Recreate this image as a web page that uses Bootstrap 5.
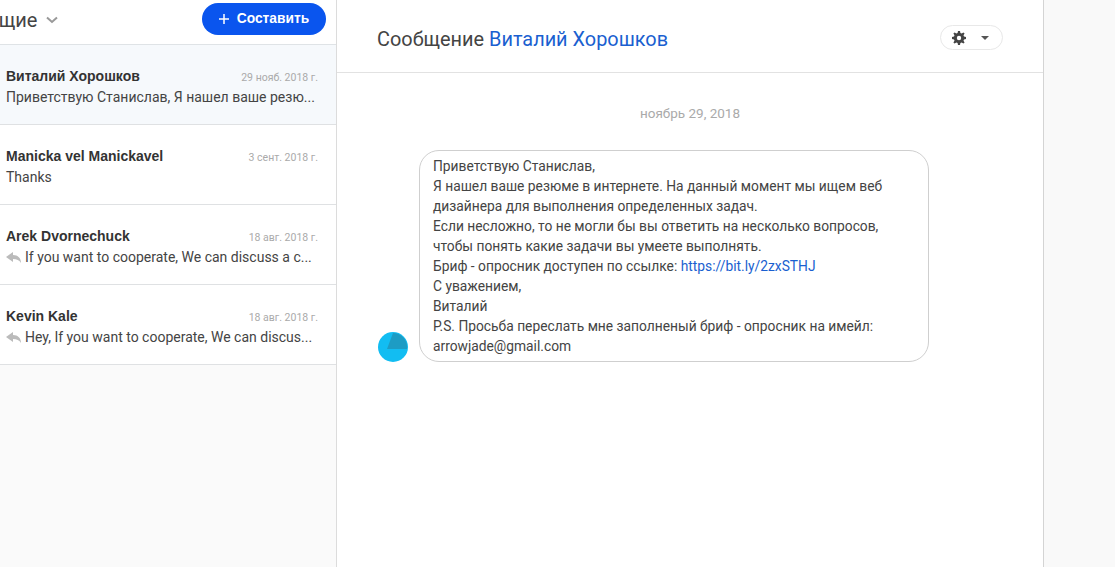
<!DOCTYPE html>
<html lang="ru">
<head>
  <meta charset="UTF-8">
  <title>Сообщение</title>
  <meta name="viewport" content="width=device-width, initial-scale=1">
  <link href="https://cdn.jsdelivr.net/npm/bootstrap@5.3.2/dist/css/bootstrap.min.css" rel="stylesheet">
  <style>
    html, body {
      height: 100%;
      overflow: hidden;
    }
    body {
      background-color: #f9f9f9;
      font-family: Roboto, "Liberation Sans", sans-serif;
      font-size: 13.8px;
      color: #333;
    }
    .page-wrap {
      width: 1044px;
      height: 567px;
    }
    .side-col {
      width: 337px;
      flex: none;
      background-color: #fafafa;
      border-right: 1px solid #dcdcdc;
    }
    .side-head {
      height: 45px;
      background-color: #fff;
      border-bottom: 1px solid #dfe3e6;
      padding-right: 10px;
      overflow: hidden;
    }
    .folder-wrap {
      margin-top: -5px;
    }
    .folder-name {
      font-size: 20px;
      margin-left: -26px;
      color: #444;
    }
    .btn-compose {
      height: 32px;
      width: 124px;
      border-radius: 16px;
      background-color: #0a55ee;
      color: #fff;
      font-family: "Liberation Sans", sans-serif;
      font-weight: 700;
      font-size: 13.8px;
      border: none;
      padding: 0;
      margin-top: -6px;
    }
    .btn-compose:hover {
      background-color: #0a4ad0;
      color: #fff;
    }
    .mail-row {
      display: block;
      height: 80px;
      padding: 21px 18px 0 6px;
      background-color: #fff;
      border-bottom: 1px solid #dfe1e3;
      line-height: 20px;
    }
    .mail-row.is-active {
      background-color: #f6f9fc;
    }
    .mail-from {
      font-family: "Liberation Sans", sans-serif;
      font-size: 14px;
      font-weight: 700;
      color: #333;
    }
    .mail-date {
      font-size: 10.5px;
      color: #aaa;
    }
    .mail-text {
      white-space: nowrap;
      font-size: 14px;
      color: #444;
      margin-top: -1px;
    }
    .main-col {
      flex: 1;
      background-color: #fff;
      border-right: 1px solid #d4d4d4;
    }
    .main-head {
      height: 73px;
      border-bottom: 1px solid #e2e2e2;
      padding: 0 40px;
    }
    .main-title {
      font-size: 19.9px;
      font-weight: 400;
      color: #444;
      margin: 8px 0 0;
    }
    .main-title span, .msg-link {
      color: #1a5fd0;
      text-decoration: none;
    }
    .btn-gear {
      width: 63px;
      height: 25px;
      border-radius: 13px;
      border: 1px solid #e8e8e8;
      background-color: #fff;
      margin-top: 3px;
      padding: 0 3px 0 0;
      gap: 15px;
    }
    .gear-caret {
      border-top: 4px solid #555;
      border-left: 4px solid transparent;
      border-right: 4px solid transparent;
    }
    .msg-day {
      color: #aaa;
      font-size: 13.5px;
      line-height: 20px;
      padding-top: 30px;
      padding-bottom: 27px;
    }
    .msg-wrap {
      padding-left: 41px;
    }
    .msg-bubble {
      width: 510px;
      border: 1px solid #cfcfcf;
      border-radius: 20px;
      padding: 5px 14px 5px 13px;
      line-height: 20px;
      color: #444;
    }
    .msg-avatar {
      display: block;
      flex: none;
      margin-right: 11px;
      margin-bottom: 0;
    }
  </style>
</head>
<body>
<div class="page-wrap d-flex">
  <div class="side-col">
    <div class="side-head d-flex align-items-center justify-content-between">
      <div class="folder-wrap d-flex align-items-center gap-2">
        <span class="folder-name">Общие</span>
        <svg width="14" height="8" viewBox="0 0 14 8" fill="none"><path d="M2 1.500 7 6l5-4.500" stroke="#999" stroke-width="2"/></svg>
      </div>
      <button type="button" class="btn btn-compose d-flex align-items-center justify-content-center gap-2">
        <svg width="10" height="10" viewBox="0 0 10 10"><path d="M5 0v10M0 5h10" stroke="#fff" stroke-width="1.500"/></svg>
        Составить
      </button>
    </div>

    <a class="mail-row is-active text-decoration-none">
      <div class="d-flex justify-content-between align-items-baseline">
        <span class="mail-from">Виталий Хорошков</span>
        <span class="mail-date">29 нояб. 2018 г.</span>
      </div>
      <div class="mail-text">Приветствую Станислав, Я нашел ваше резю...</div>
    </a>
    <a class="mail-row text-decoration-none">
      <div class="d-flex justify-content-between align-items-baseline">
        <span class="mail-from">Manicka vel Manickavel</span>
        <span class="mail-date">3 сент. 2018 г.</span>
      </div>
      <div class="mail-text">Thanks</div>
    </a>
    <a class="mail-row text-decoration-none">
      <div class="d-flex justify-content-between align-items-baseline">
        <span class="mail-from">Arek Dvornechuck</span>
        <span class="mail-date">18 авг. 2018 г.</span>
      </div>
      <div class="mail-text d-flex align-items-center gap-1">
        <svg width="15" height="11" viewBox="0 0 15 11"><path d="M0 5 7 0v3c5 0 8 3 8 8-2-3-4-4-8-4v3z" fill="#bbb"/></svg>
        <span>If you want to cooperate, We can discuss a c...</span>
      </div>
    </a>
    <a class="mail-row text-decoration-none">
      <div class="d-flex justify-content-between align-items-baseline">
        <span class="mail-from">Kevin Kale</span>
        <span class="mail-date">18 авг. 2018 г.</span>
      </div>
      <div class="mail-text d-flex align-items-center gap-1">
        <svg width="15" height="11" viewBox="0 0 15 11"><path d="M0 5 7 0v3c5 0 8 3 8 8-2-3-4-4-8-4v3z" fill="#bbb"/></svg>
        <span>Hey, If you want to cooperate, We can discus...</span>
      </div>
    </a>
  </div>

  <div class="main-col">
    <div class="main-head d-flex align-items-center justify-content-between">
      <h1 class="main-title">Сообщение <span>Виталий Хорошков</span></h1>
      <button type="button" class="btn-gear d-flex align-items-center justify-content-center">
        <svg width="14" height="14" viewBox="0 0 14 14"><path d="M6 0h2l.4 2 1.300.500L11.400 1.400 12.600 2.600 11.500 4.300 12 5.600l2 .4v2l-2 .4-.5 1.300 1.100 1.700-1.200 1.200-1.700-1.100-1.300.5-.4 2H6l-.4-2-1.300-.5-1.700 1.100-1.200-1.200 1.100-1.700L2 8.400 0 8V6l2-.4.5-1.300L1.400 2.600 2.600 1.400l1.700 1.100L5.600 2z" fill="#444"/><circle cx="7" cy="7" r="2.200" fill="#fff"/></svg>
        <span class="gear-caret"></span>
      </button>
    </div>
    <div class="msg-day text-center">ноябрь 29, 2018</div>
    <div class="msg-wrap d-flex align-items-end">
      <svg class="msg-avatar" width="30" height="30" viewBox="0 0 30 30"><circle cx="15" cy="15" r="15" fill="#12bdf2"/><path d="M15 1a14 14 0 0 1 14 16H9z" fill="#1d9cc4"/></svg>
      <div class="msg-bubble">
        Приветствую Станислав,<br>
        Я нашел ваше резюме в интернете. На данный момент мы ищем веб дизайнера для выполнения определенных задач.<br>
        Если несложно, то не могли бы вы ответить на несколько вопросов, чтобы понять какие задачи вы умеете выполнять.<br>
        Бриф - опросник доступен по ссылке: <a class="msg-link" href="#">https://bit.ly/2zxSTHJ</a><br>
        С уважением,<br>
        Виталий<br>
        P.S. Просьба переслать мне заполненый бриф - опросник на имейл: arrowjade@gmail.com
      </div>
    </div>
  </div>
</div>
<script src="https://cdn.jsdelivr.net/npm/bootstrap@5.3.2/dist/js/bootstrap.bundle.min.js"></script>
</body>
</html>
